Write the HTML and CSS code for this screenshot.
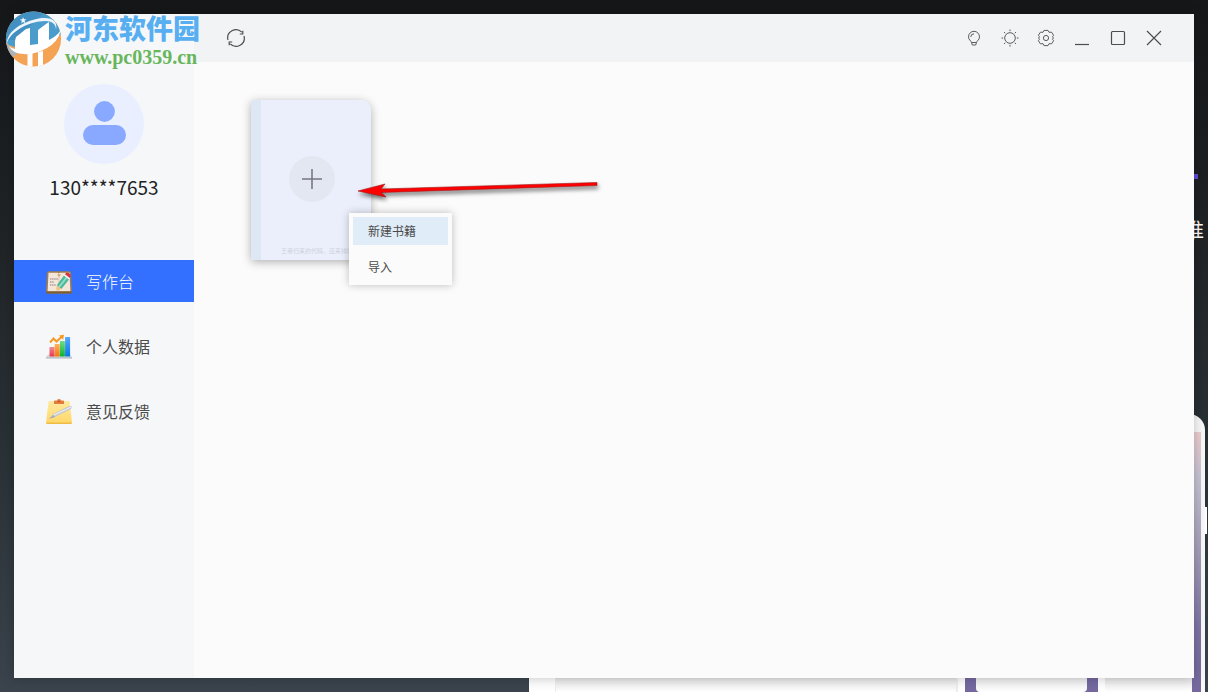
FILE: index.html
```html
<!DOCTYPE html>
<html lang="zh-CN">
<head>
<meta charset="utf-8">
<title>写作台</title>
<link rel="stylesheet" href="styles.css">
</head>
<body>
<div class="desktop">
  <div class="wallpaper" aria-hidden="true">
    <span class="accent"></span>
    <span class="slogan">推</span>
    <div class="phone"></div>
    <div class="phone-button"></div>
    <div class="page-strip">
      <div class="strip-panel"></div>
      <div class="strip-card"><div class="strip-screen"></div></div>
      <div class="strip-tail"></div>
    </div>
  </div>

  <div class="app">
    <aside class="sidebar">
      <div class="profile">
        <svg class="avatar" viewBox="0 0 80 80">
          <circle cx="40" cy="40" r="40" fill="#e9efff"/>
          <circle cx="40.500" cy="27.500" r="10.400" fill="#88a9ff"/>
          <rect x="19" y="41" width="43" height="20" rx="10" fill="#88a9ff"/>
        </svg>
        <div class="account">130****7653</div>
      </div>
      <nav class="menu">
        <a class="menu-item active" href="#">
          <svg class="menu-icon" viewBox="0 -2 26 26">
            <path d="M2.500 1.200h21q1.300 0 1.400 1.500l1 18.800q0 2-2 2h-22q-2 0-1.900-2L1 2.700q.1-1.500 1.500-1.500z" fill="#a37d48"/>
            <path d="M2.500 2.800H12l.7 1 .8-1h10l.9 18.500H1.600z" fill="#f5e6da"/>
            <path d="M13 4v17" stroke="#dbc6b4"/>
            <path d="M11 4.500l2 2 2-2z" fill="#c99b50"/>
            <path d="M4 9h8M4 12h4M4 15h6" stroke="#857d78" stroke-dasharray="1.500 .6"/>
            <path d="M10.800 15.200L18 5.500l5 4L15.300 19z" fill="#4fb89a"/>
            <path d="M13 17L20.600 7.500" stroke="#8fe0c8" stroke-width="2"/>
            <path d="M18 5.500L19.300 4l5 4L23 9.500z" fill="#f1f1f1"/>
            <path d="M19 4.300q1.200-2.500 3.200-1.500 2.600 1.200 2.500 3.400l-.9 1.800z" fill="#d9333f"/>
            <path d="M10.800 15.200l4.500 3.800-5.300 1.500z" fill="#f1c37c"/>
            <path d="M0 21.500h26v.5q-.5 1.500-2 1.500H2Q.5 23.500 0 22z" fill="#7c5c33"/>
          </svg>
          <span>写作台</span>
        </a>
        <a class="menu-item" href="#">
          <svg class="menu-icon" viewBox="0 -1 26 26">
            <defs>
              <linearGradient id="red" x2="0" y2="1"><stop stop-color="#ef8d98"/><stop offset="1" stop-color="#e7374e"/></linearGradient>
              <linearGradient id="orange" x2="0" y2="1"><stop stop-color="#ffb159"/><stop offset="1" stop-color="#f27610"/></linearGradient>
              <linearGradient id="green" x2="0" y2="1"><stop stop-color="#73dc85"/><stop offset="1" stop-color="#0bb12c"/></linearGradient>
              <linearGradient id="blue" x2="0" y2="1"><stop stop-color="#55a9ff"/><stop offset="1" stop-color="#0876e8"/></linearGradient>
            </defs>
            <path d="M2 20.500h22l2 2.500v1.500H0V23z" fill="#d6dadd"/>
            <path d="M0 23h26v1.500H0z" fill="#bfc4c8"/>
            <rect x="3.500" y="13" width="5" height="9.500" rx=".5" fill="url(#red)"/>
            <rect x="8.700" y="10" width="5" height="12.500" rx=".5" fill="url(#orange)"/>
            <rect x="13.900" y="7" width="5" height="15.500" rx=".5" fill="url(#green)"/>
            <rect x="19.100" y="3" width="5" height="19.500" rx=".5" fill="url(#blue)"/>
            <path d="M4 8.500l3.500-4 3 3L16 2.500" fill="none" stroke="#f79a24" stroke-width="2"/>
            <path d="M13 1.500l5-.7-.8 5z" fill="#f79a24"/>
          </svg>
          <span>个人数据</span>
        </a>
        <a class="menu-item" href="#">
          <svg class="menu-icon" viewBox="0 -1 26 26">
            <defs><linearGradient id="note" x2="0" y2="1"><stop stop-color="#ffe9a0"/><stop offset="1" stop-color="#ffd767"/></linearGradient></defs>
            <path d="M3.500 2h19q1 0 1.200 1L26 23.500q0 1.500-1.500 1.500h-23Q0 25 0 23.500L2.500 3q.1-1 1-1z" fill="url(#note)"/>
            <path d="M0 23.500h26q-.2 1.500-1.500 1.500h-23Q.2 25 0 23.500z" fill="#eebb45"/>
            <path d="M8 5V2.500q0-1 1-1h2Q11 0 13 0t2 1.500h2q1 0 1 1V5z" fill="#e37b3c"/>
            <path d="M12 2.500h2" stroke="#a9532a"/>
            <path d="M4 19l3-4L23 7l3 .5-1 2.500L9 18z" fill="#c5c8cc"/>
            <path d="M7 16.500L25 8" stroke="#eef0f2" stroke-width="1.300"/>
            <path d="M2.500 20l5-4 1.500 2z" fill="#a6abb0"/>
          </svg>
          <span>意见反馈</span>
        </a>
      </nav>
    </aside>

    <div class="workspace">
      <header class="toolbar">
        <button class="tool" aria-label="刷新">
          <svg viewBox="0 0 20 20"><path d="M2 12A8.200 8.200 0 0 1 15.800 4.200M18 8A8.200 8.200 0 0 1 4.200 15.800M16.800 2.800V6h-3M3.200 17.200V14h3"/></svg>
        </button>
        <div class="window-tools">
          <button class="tool fine" aria-label="提示">
            <svg viewBox="0 0 20 20"><path d="M7.500 14.500C7 12.500 4.500 12 4.500 8.800a5.500 5.500 0 0 1 11 0c0 3.200-2.500 3.700-3 5.700zM7.500 14.500l.8 2.500h3.400l.8-2.500M6.800 9A3.200 3.200 0 0 1 10 5.800"/></svg>
          </button>
          <button class="tool fine" aria-label="亮度">
            <svg viewBox="0 0 20 20"><circle cx="10" cy="10" r="5.300"/><path d="M10 1.500v1.700M10 16.800v1.700M1.500 10h1.700M16.800 10h1.700M4 4l1.200 1.200M14.800 14.800L16 16M4 16l1.200-1.200M14.800 5.200L16 4"/></svg>
          </button>
          <button class="tool fine" aria-label="设置">
            <svg viewBox="0 0 20 20"><circle cx="10" cy="10" r="2.600"/><path d="M8 2.400h4l1 1.900 2.600-.1 2 3.100-1.100 1.400.9 1.300-.9 1.300 1.100 1.400-2 3.100-2.600-.1-1 1.900H8l-1-1.900-2.600.1-2-3.100 1.100-1.400-.9-1.300.9-1.300-1.100-1.400 2-3.100 2.600.1z" stroke-linejoin="round"/></svg>
          </button>
          <button class="tool" aria-label="最小化">
            <svg viewBox="0 0 20 20"><path d="M3 16.500h14"/></svg>
          </button>
          <button class="tool" aria-label="最大化">
            <svg viewBox="0 0 20 20"><rect x="3.500" y="3.500" width="13" height="13" rx="1"/></svg>
          </button>
          <button class="tool" aria-label="关闭">
            <svg viewBox="0 0 20 20"><path d="M3 3l14 14M17 3L3 17"/></svg>
          </button>
        </div>
      </header>
      <main class="shelf">
        <div class="book-slot">
          <button class="book" aria-label="新建">
            <span class="add"><svg viewBox="0 0 20 20"><path d="M10 0v20M0 10h20"/></svg></span>
            <span class="motto">王者归来的代码，应来排版</span>
          </button>
          <div class="context-menu">
            <button class="context-item selected">新建书籍</button>
            <button class="context-item">导入</button>
          </div>
          <svg class="arrow" viewBox="0 0 250 34">
            <path d="M7 17l27-7-4 5L246 8.500v3L30 18.500l5 4.500z" fill="#f00" stroke="#a01818" stroke-width=".6"/>
          </svg>
        </div>
      </main>
    </div>
  </div>

  <div class="watermark">
    <svg class="emblem" viewBox="0 0 58 58">
      <defs><clipPath id="disc"><circle cx="28.500" cy="29" r="27.600"/></clipPath></defs>
      <g clip-path="url(#disc)">
        <path d="M0 0h58v58H0z" fill="#f4a354"/>
        <path d="M0 0h58v22Q44 38 20 38 6 38 0 32z" fill="#4a9ccd"/>
        <path d="M0 0h42L10 30H0z" fill="#3784b5" opacity=".5"/>
        <path d="M0 26q2 12 14 16l-6 5L0 50z" fill="#adb2b8"/>
      </g>
      <path d="M10 31l1-4 10-8 4-1v17l8-1V20l8-6 3-2v18q8-4 12-10-3 12-14 18-12 7-24 6Q7 43 4 36q3 3 6 3z" fill="#fff"/>
      <path d="M22.500 42h5v14.500h-5zM33 42l5-1v14l-5 1.200z" fill="#fff"/>
      <path d="M2 33C2 20 20 11 34 8.500c13-2 19 3 17 11 0-7-6-10-17-8C19 14 5 23 2 33z" fill="#edf5fb"/>
      <path d="M18 7l1 2.300 2.500-.1-1.900 1.600.8 2.400-2.200-1.300-2 1.500.7-2.500-2-1.500 2.500-.1z" fill="#eef9ff"/>
    </svg>
    <div class="brand">
      <div class="brand-name">河东软件园</div>
      <div class="brand-url">www.pc0359.cn</div>
    </div>
  </div>
</div>
</body>
</html>
```
FILE: styles.css
```css
* { box-sizing: border-box; }
body {
  margin: 0;
  font-family: "Noto Sans CJK SC", sans-serif;
  color: #4b4b4b;
}
button { padding: 0; border: 0; background: none; font: inherit; color: inherit; }
.desktop {
  position: relative;
  display: flex;
  min-height: 100vh;
  padding: 14px;
  overflow: hidden;
  background: linear-gradient(#151719, #202427 35%, #2b3338 68%, #3b444d);
}
.wallpaper { position: absolute; inset: 0; }
.accent { position: absolute; right: 10px; top: 174px; width: 6px; height: 5px; background: #604fd8; }
.slogan { position: absolute; right: 4px; top: 215px; font-size: 20px; line-height: 30px; color: #fff; }
.phone {
  position: absolute;
  right: 3px;
  top: 414px;
  bottom: -20px;
  width: 60px;
  border: solid #fafafa;
  border-width: 18px 4px 0 0;
  border-radius: 0 16px 0 0;
  background: linear-gradient(#efcfd2, #c8c5d5 16%, #aaa4be 40%, #8176a5 70%, #71649b);
}
.phone-button { position: absolute; right: 1px; top: 507px; width: 2px; height: 27px; background: #fff; }
.page-strip {
  position: absolute;
  left: 529px;
  right: 16px;
  bottom: 0;
  height: 18px;
  display: flex;
  background: #fff;
}
.strip-panel { flex: 1; margin-left: 26px; border-left: 1px solid #eee; border-right: 2px solid #eee; background: linear-gradient(#e0e0e0, #fff); }
.strip-card { width: 133px; margin: 0 7px; padding: 0 11px; background: #7569a0; }
.strip-screen { height: 100%; border-radius: 0 0 4px 4px; background: linear-gradient(#e8e8e8, #fff); }
.strip-tail { width: 87px; border-radius: 0 0 4px 0; background: linear-gradient(#e0e0e0, #fff); }

.app { position: relative; flex: 1; display: flex; background: #fbfbfb; box-shadow: 0 0 12px rgba(0, 0, 0, .25); }
.sidebar { width: 180px; background: #f5f7f9; }
.profile { display: flex; flex-direction: column; align-items: center; padding-top: 70px; }
.avatar { width: 80px; height: 80px; }
.account { margin-top: 7px; font-size: 19px; line-height: 32px; color: #222; }
.menu { display: flex; flex-direction: column; gap: 23px; margin-top: 57px; }
.menu-item {
  display: flex;
  align-items: center;
  gap: 14px;
  height: 42px;
  padding-left: 32px;
  font-size: 16px;
  line-height: 24px;
  color: #4b4b4b;
  text-decoration: none;
}
.menu-item.active { background: #3370ff; color: #fff; font-weight: 300; }
.menu-icon { width: 26px; height: 26px; }

.workspace { flex: 1; display: flex; flex-direction: column; }
.toolbar {
  display: flex;
  align-items: center;
  justify-content: space-between;
  height: 48px;
  padding: 0 30px 0 32px;
  background: #f1f3f5;
}
.window-tools { display: flex; gap: 16px; }
.tool { width: 20px; height: 20px; }
.tool svg { display: block; width: 20px; height: 20px; fill: none; stroke: #4b4e51; stroke-width: 1.2; }
.tool.fine svg { stroke: #5a5d60; stroke-width: 1; }
.shelf { flex: 1; padding: 38px 57px; }
.book-slot { position: relative; width: 120px; }
.book {
  display: flex;
  flex-direction: column;
  align-items: center;
  width: 120px;
  height: 160px;
  padding: 56px 0 0 2px;
  overflow: hidden;
  border-radius: 2px 10px 0 2px;
  background: linear-gradient(90deg, #dee7f4 10px, #ebeffb 10px);
  box-shadow: 0 2px 10px rgba(0, 0, 0, .3);
}
.add { display: grid; place-items: center; width: 46px; height: 46px; border-radius: 50%; background: #e3e7f2; }
.add svg { width: 20px; height: 20px; stroke: #777a82; stroke-width: 1.6; }
.motto { align-self: flex-start; margin: 44px 0 0 28px; font-size: 6px; line-height: 10px; white-space: nowrap; color: #ccd1de; }
.context-menu {
  position: absolute;
  left: 98px;
  top: 113px;
  display: flex;
  flex-direction: column;
  gap: 8px;
  width: 103px;
  padding: 4px;
  background: #fbfbfb;
  box-shadow: 0 0 8px rgba(0, 0, 0, .25);
}
.context-item { height: 28px; padding: 0 0 2px 15px; font-size: 12px; text-align: left; }
.context-item.selected { background: #e0ecf8; }
.arrow { position: absolute; left: 100px; top: 74px; width: 250px; height: 34px; filter: drop-shadow(1px 3px 2px rgba(0, 0, 0, .55)); }

.watermark { position: absolute; left: 5px; top: 10px; display: flex; gap: 2px; }
.emblem { width: 58px; height: 58px; }
.brand-name { font-size: 27px; line-height: 36px; font-weight: 900; color: #57aef0; }
.brand-url { font-family: "Liberation Serif", serif; font-size: 20px; line-height: 22px; font-weight: 700; color: #68b65b; }
```
